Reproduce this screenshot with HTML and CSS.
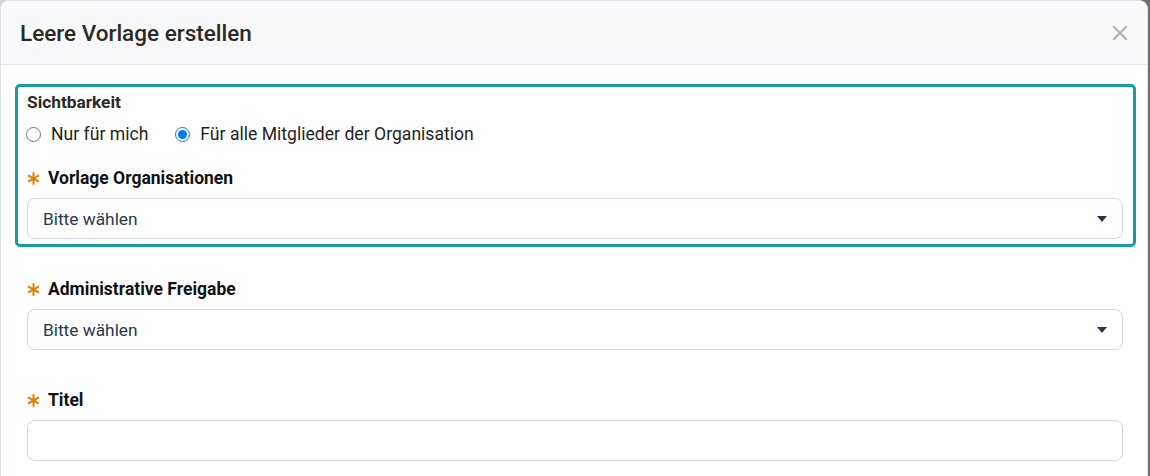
FILE: index.html
```html
<!DOCTYPE html>
<html lang="de">
<head>
    <meta charset="UTF-8">
    <meta name="viewport" content="width=device-width, initial-scale=1.0">
    <title>Leere Vorlage erstellen</title>
    <link rel="stylesheet" href="styles.css">
</head>
<body>
<div class="modal">
    <div class="modal-header">
        <h2 class="modal-title">Leere Vorlage erstellen</h2>
        <button class="close" aria-label="Schließen">
            <svg width="16" height="16" viewBox="0 0 16 16"><path d="M2 2L14 14M14 2L2 14" stroke="#b3b3b3" stroke-width="2.4" stroke-linecap="round"/></svg>
        </button>
    </div>
    <div class="modal-body">
        <div class="highlight">
            <div class="label">Sichtbarkeit</div>
            <div class="radios">
                <label class="radio"><input type="radio" name="vis"> Nur für mich</label>
                <label class="radio"><input type="radio" name="vis" checked> Für alle Mitglieder der Organisation</label>
            </div>
            <div class="label req">
                <svg class="star" width="13" height="13" viewBox="0 0 12 12"><path d="M6 0.3V11.7M1 3.1L11 8.9M11 3.1L1 8.9" stroke="#e08000" stroke-width="1.9"/></svg>
                Vorlage Organisationen
            </div>
            <div class="select"><span>Bitte wählen</span><span class="caret"></span></div>
        </div>

        <div class="field">
            <div class="label req">
                <svg class="star" width="13" height="13" viewBox="0 0 12 12"><path d="M6 0.3V11.7M1 3.1L11 8.9M11 3.1L1 8.9" stroke="#e08000" stroke-width="1.9"/></svg>
                Administrative Freigabe
            </div>
            <div class="select"><span>Bitte wählen</span><span class="caret"></span></div>
        </div>

        <div class="field">
            <div class="label req">
                <svg class="star" width="13" height="13" viewBox="0 0 12 12"><path d="M6 0.3V11.7M1 3.1L11 8.9M11 3.1L1 8.9" stroke="#e08000" stroke-width="1.9"/></svg>
                Titel
            </div>
            <input class="text-input" type="text">
        </div>
    </div>
</div>
</body>
</html>
```

FILE: styles.css
```css
html, body { margin: 0; height: 100%; }
body { font-family: Roboto, "Liberation Sans", sans-serif; background: linear-gradient(90deg, #d4d4d4, #6f6f6f); overflow: hidden; }
.modal {
    width: 1146px; height: 100%; background: #fff;
    border: 1px solid #dfe3e9; border-bottom: none;
    border-radius: 9px 9px 0 0; overflow: hidden;
}
.modal-header {
    height: 63px; background: #f8f9fb; border-bottom: 1px solid #e2e5ea;
    display: flex; align-items: center; justify-content: space-between;
    padding: 0 19px 0 19px;
}
.modal-title { margin: 0; font-size: 22.5px; font-weight: 500; color: #2d2925; }
.close { border: none; background: none; padding: 0; display: flex; margin-top: 0; }
.modal-body { padding: 19px 11px 0 14px; }
.highlight {
    border: 3px solid #189e9a; border-radius: 5px;
    padding: 3px 10px 5px 9px; margin-bottom: 30px;
}
.label {
    font-size: 17.5px; font-weight: 700; color: #111; line-height: 24px;
    display: flex; align-items: center;
}
.highlight > .label:first-child { color: #2a2a2a; font-size: 17.3px; }
.star { margin-right: 8px; margin-left: 0; }
.radios { display: flex; gap: 28px; margin: 8px 0 20px; }
.radio {
    display: flex; align-items: center; font-size: 17.6px; color: #1f1f1f;
    line-height: 24px;
}
.radio input {
    width: 15px; height: 15px; margin: 0 10px 0 -1px; accent-color: #0b79f7;
}
.select {
    box-sizing: border-box; margin-top: 8px; height: 41px;
    border: 1px solid #d3d8e0; border-radius: 8px;
    display: flex; align-items: center; justify-content: space-between;
    padding: 0 15px 0 15px; font-size: 17.3px; color: #2a3852;
}
.caret {
    width: 0; height: 0; border-left: 5.5px solid transparent; border-right: 5.5px solid transparent;
    border-top: 6px solid #2a3348;
}
.field { margin-bottom: 38px; padding: 0 13px 0 12px; }
.text-input {
    display: block; box-sizing: border-box; width: 100%; margin-top: 8px; height: 41px;
    border: 1px solid #d3d8e0; border-radius: 8px; font: inherit;
}
```
